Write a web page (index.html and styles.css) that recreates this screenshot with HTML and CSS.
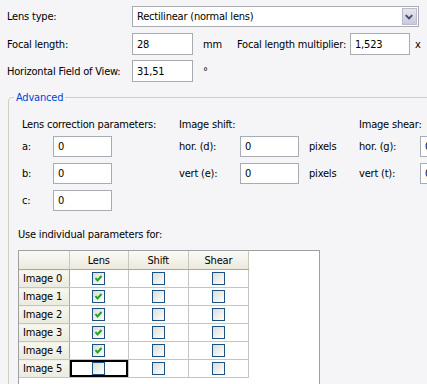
FILE: index.html
```html
<!DOCTYPE html>
<html lang="en">
<head>
    <meta charset="UTF-8">
    <meta name="viewport" content="width=device-width, initial-scale=1.0">
    <title>Lens parameters</title>
    <link rel="stylesheet" href="styles.css">
</head>
<body>

<div class="top">
    <div class="row row-first">
        <span class="label">Lens type:</span>
        <div class="combo">
            <span class="combo-text">Rectilinear (normal lens)</span>
            <span class="combo-btn">
                <svg width="15" height="17" viewBox="0 0 15 17"><polyline points="4,7 7.5,10.5 11,7" fill="none" stroke="#3d4a6b" stroke-width="2"/></svg>
            </span>
        </div>
    </div>
    <div class="row">
        <span class="label">Focal length:</span>
        <input class="field field-wide" type="text" value="28">
        <span class="unit">mm</span>
        <span class="label-mult">Focal length multiplier:</span>
        <input class="field" type="text" value="1,523">
        <span class="unit-x">x</span>
    </div>
    <div class="row">
        <span class="label">Horizontal Field of View:</span>
        <input class="field field-wide" type="text" value="31,51">
        <span class="unit">°</span>
    </div>
</div>

<fieldset class="advanced">
    <legend>Advanced</legend>
    <div class="params">
        <div class="col col-lens">
            <div class="col-title">Lens correction parameters:</div>
            <div class="param"><span class="plabel plabel-short">a:</span><input class="field" type="text" value="0"></div>
            <div class="param"><span class="plabel plabel-short">b:</span><input class="field" type="text" value="0"></div>
            <div class="param"><span class="plabel plabel-short">c:</span><input class="field" type="text" value="0"></div>
        </div>
        <div class="col col-shift">
            <div class="col-title">Image shift:</div>
            <div class="param"><span class="plabel">hor. (d):</span><input class="field" type="text" value="0"><span class="unit">pixels</span></div>
            <div class="param"><span class="plabel">vert (e):</span><input class="field" type="text" value="0"><span class="unit">pixels</span></div>
        </div>
        <div class="col col-shear">
            <div class="col-title">Image shear:</div>
            <div class="param"><span class="plabel">hor. (g):</span><input class="field" type="text" value="0"></div>
            <div class="param"><span class="plabel">vert (t):</span><input class="field" type="text" value="0"></div>
        </div>
    </div>

    <div class="individual">Use individual parameters for:</div>

    <div class="grid-panel">
        <table class="grid">
            <colgroup>
                <col class="c-head">
                <col class="c-lens">
                <col class="c-shift">
                <col class="c-shear">
            </colgroup>
            <thead>
                <tr><th></th><th>Lens</th><th>Shift</th><th>Shear</th></tr>
            </thead>
            <tbody>
                <tr><th>Image 0</th><td><span class="check checked"></span></td><td><span class="check"></span></td><td><span class="check"></span></td></tr>
                <tr><th>Image 1</th><td><span class="check checked"></span></td><td><span class="check"></span></td><td><span class="check"></span></td></tr>
                <tr><th>Image 2</th><td><span class="check checked"></span></td><td><span class="check"></span></td><td><span class="check"></span></td></tr>
                <tr><th>Image 3</th><td><span class="check checked"></span></td><td><span class="check"></span></td><td><span class="check"></span></td></tr>
                <tr><th>Image 4</th><td><span class="check checked"></span></td><td><span class="check"></span></td><td><span class="check"></span></td></tr>
                <tr><th>Image 5</th><td class="selected"><span class="check"></span></td><td><span class="check"></span></td><td><span class="check"></span></td></tr>
            </tbody>
        </table>
    </div>
</fieldset>

</body>
</html>
```

FILE: styles.css
```css
body {
    margin: 0;
    height: 384px;
    overflow: hidden;
    font-family: "DejaVu Sans Condensed", "DejaVu Sans", sans-serif;
    font-size: 11px;
    letter-spacing: -0.2px;
    color: #000;
    background-color: #f5f5f7;
}
.top {
    padding: 6px 0 0 7px;
}
.row {
    display: flex;
    align-items: center;
    height: 22px;
    margin-bottom: 5px;
    white-space: nowrap;
}
.row-first {
    height: 21px;
    margin-bottom: 6px;
}
.label {
    width: 125px;
    flex-shrink: 0;
}
.field {
    width: 60px;
    height: 22px;
    box-sizing: border-box;
    padding: 0 4px;
    border: 1px solid #a5acb2;
    background-color: #fff;
    font-family: inherit;
    font-size: 11px;
    letter-spacing: inherit;
    color: #000;
    outline: none;
    flex-shrink: 0;
}
.field-wide {
    width: 61px;
}
.unit {
    margin-left: 10px;
    width: 34px;
    flex-shrink: 0;
}
.label-mult {
    width: 113px;
    flex-shrink: 0;
}
.unit-x {
    margin-left: 5px;
}
.combo {
    display: flex;
    align-items: center;
    width: 287px;
    height: 21px;
    box-sizing: border-box;
    border: 1px solid #a5acb2;
    background-color: #fff;
    padding: 1px;
}
.combo-text {
    flex: 1;
    padding-left: 3px;
}
.combo-btn {
    display: flex;
    width: 15px;
    height: 17px;
    background: linear-gradient(#e6e6f0, #c8c9da);
    border: 1px solid #b9bbcd;
    box-sizing: border-box;
}
.combo-btn svg {
    display: block;
    margin: -1px 0 0 -1px;
}
.advanced {
    margin: 9px 0 0 8px;
    padding: 14px 0 0 9px;
    width: 520px;
    height: 400px;
    border: 1px solid #d0d0bf;
    border-top-left-radius: 4px;
}
.advanced legend {
    margin-left: -4px;
    padding: 0 2px;
    line-height: 13px;
    color: #0046d5;
}
.params {
    display: flex;
    padding-left: 4px;
    white-space: nowrap;
}
.col-lens {
    width: 157px;
    flex-shrink: 0;
}
.col-shift {
    width: 180px;
    flex-shrink: 0;
}
.col-title {
    height: 14px;
    line-height: 14px;
    margin-bottom: 4px;
}
.param {
    display: flex;
    align-items: center;
    height: 21px;
    margin-bottom: 6px;
}
.param .field {
    width: 59px;
    height: 21px;
}
.plabel {
    width: 61px;
    flex-shrink: 0;
}
.plabel-short {
    width: 31px;
}
.individual {
    margin-top: 11px;
    line-height: 14px;
}
.grid-panel {
    margin-top: 8px;
    width: 302px;
    height: 160px;
    box-sizing: border-box;
    border: 1px solid #a0a0a0;
    background-color: #fff;
}
.grid {
    border-collapse: collapse;
    table-layout: fixed;
    width: 230px;
}
.c-head {
    width: 50px;
}
.c-lens {
    width: 59px;
}
.c-shift,
.c-shear {
    width: 60px;
}
.grid th,
.grid td {
    height: 17px;
    padding: 0;
    border-right: 1px solid #c4c4c4;
    border-bottom: 1px solid #c4c4c4;
    text-align: center;
    font-weight: normal;
}
.grid thead th {
    height: 18px;
    background: linear-gradient(#fbfaf6, #ebe9de);
    border-right-color: #c9c7ba;
    border-bottom-color: #aca899;
}
.grid tbody th {
    text-align: left;
    padding-left: 4px;
    background: linear-gradient(#f7f6f0, #ebeadf);
    border-right-color: #aca899;
}
.check {
    display: inline-block;
    vertical-align: middle;
    width: 13px;
    height: 13px;
    box-sizing: border-box;
    border: 1px solid #1c5180;
    background: linear-gradient(135deg, #dcdcd7, #fff);
}
.check.checked {
    background-image:
        url("data:image/svg+xml,%3Csvg xmlns='http://www.w3.org/2000/svg' width='11' height='11'%3E%3Cpolyline points='2.5,5 4.5,7.5 8.5,3' fill='none' stroke='%2321a121' stroke-width='2'/%3E%3C/svg%3E"),
        linear-gradient(135deg, #dcdcd7, #fff);
}
.grid td.selected {
    box-shadow: inset 0 0 0 2px #000;
}
```
